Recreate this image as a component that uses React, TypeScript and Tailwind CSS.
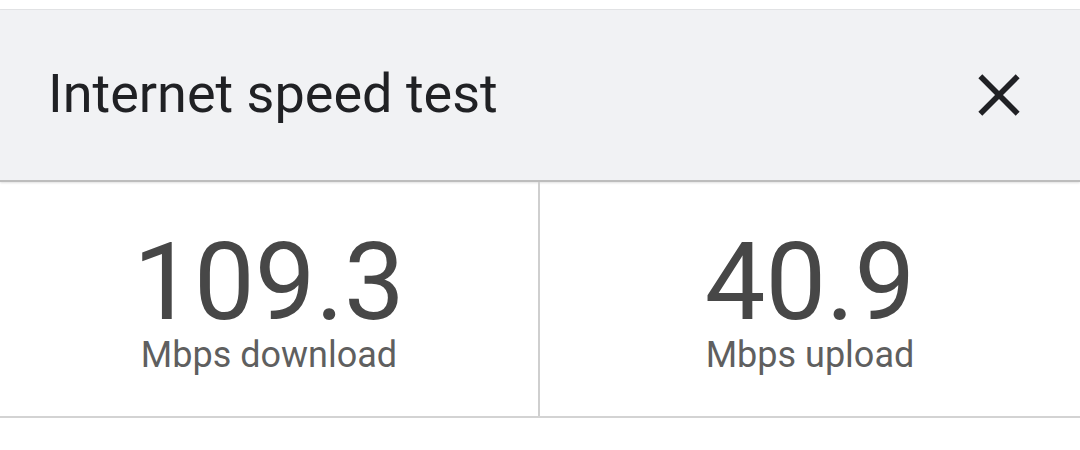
import React from "react";

export default function App() {
  return (
    <div className="w-[1080px] h-[450px] bg-white" style={{ fontFamily: "Roboto, 'Noto Sans', sans-serif" }}>
      <div className="h-[10px] bg-white border-b border-[#e3e4e6]" />
      <div className="h-[172px] bg-[#f1f2f4] border-b-2 border-[#bdbdbd] flex items-center justify-between pl-[48px] pr-[46px] shadow-[0_1px_2px_rgba(0,0,0,0.12)]">
        <div className="text-[54px] leading-none text-[#202124] pb-[2px]">Internet speed test</div>
        <svg width="70" height="70" viewBox="0 0 24 24" className="text-[#202124]">
          <path d="M5.6 5.6 L18.4 18.4 M18.4 5.6 L5.6 18.4" stroke="currentColor" strokeWidth="1.9" strokeLinecap="butt" fill="none" />
        </svg>
      </div>
      <div className="h-[236px] grid grid-cols-2 border-b-2 border-[#d3d3d3]">
        <div className="flex flex-col items-center justify-center border-r-2 border-[#cfcfcf] pt-[2px]">
          <div className="text-[108px] leading-[110px] text-[#474747]">109.3</div>
          <div className="text-[36px] leading-none text-[#5f5f5f]">Mbps download</div>
        </div>
        <div className="flex flex-col items-center justify-center pt-[2px]">
          <div className="text-[108px] leading-[110px] text-[#474747]">40.9</div>
          <div className="text-[36px] leading-none text-[#5f5f5f]">Mbps upload</div>
        </div>
      </div>
    </div>
  );
}
